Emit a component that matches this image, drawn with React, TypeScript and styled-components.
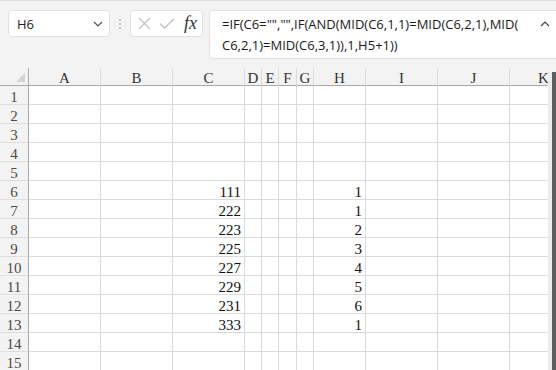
import React from "react";
import styled, { createGlobalStyle } from "styled-components";

const GlobalStyle = createGlobalStyle`
  html, body {
    margin: 0;
    padding: 0;
    background: #f3f3f3;
    overflow: hidden;
  }
  body {
    font-family: "Open Sans", "Noto Sans CJK SC", sans-serif;
  }
`;

const Page = styled.div`
  width: 556px;
  height: 370px;
  overflow: hidden;
  background: #f3f3f3;
`;

const Toolbar = styled.div`
  display: flex;
  align-items: flex-start;
  height: 68px;
  box-sizing: border-box;
  padding: 9px 0 0 8px;
  border-top: 1px solid #dedede;
`;

const NameBox = styled.div`
  display: flex;
  align-items: center;
  justify-content: space-between;
  width: 102px;
  height: 27px;
  box-sizing: border-box;
  padding: 0 6px 0 8px;
  background: #fff;
  border: 1px solid #e1e1e1;
  border-radius: 4px;
  font-size: 13px;
  color: #222;
`;

const Dots = styled.div`
  display: flex;
  flex-direction: column;
  gap: 2px;
  margin: 9px 9px 0 9px;
  span {
    width: 2px;
    height: 2px;
    background: #b4b4b4;
    border-radius: 1px;
  }
`;

const FuncBox = styled.div`
  display: flex;
  align-items: center;
  gap: 8px;
  width: 73px;
  height: 27px;
  box-sizing: border-box;
  padding: 0 4px 0 7px;
  background: #fff;
  border: 1px solid #e1e1e1;
  border-radius: 4px;
`;

const Fx = styled.span`
  font-family: "Liberation Serif", serif;
  font-style: italic;
  font-size: 18px;
  color: #333;
  margin-left: 1px;
`;

const FormulaBox = styled.div`
  position: relative;
  flex: 1;
  height: 49px;
  margin-left: 6px;
  box-sizing: border-box;
  padding: 3px 0 0 12px;
  background: #fff;
  border: 1px solid #e1e1e1;
  border-right: none;
  border-radius: 4px 0 0 4px;
  font-size: 13px;
  line-height: 21px;
  color: #1a1a1a;
  white-space: nowrap;
`;

const Collapse = styled.svg`
  position: absolute;
  top: 10px;
  right: 6px;
`;

const Sheet = styled.div`
  display: flex;
  height: 302px;
`;

const GridWrap = styled.div`
  width: 548px;
  overflow: hidden;
  flex-shrink: 0;
`;

const Grid = styled.div`
  display: grid;
  grid-template-columns: 29px 72px 72px 72px 17px 17px 18px 17px 52px 72px 72px 68px;
  grid-template-rows: 18px;
  grid-auto-rows: 19px;
  width: 577px;
  font-family: "Liberation Serif", "Noto Sans CJK SC", serif;
  font-size: 15px;
`;

const Corner = styled.div`
  position: relative;
  background: #f3f3f3;
  border-right: 1px solid #a9a9a9;
  border-bottom: 1px solid #a9a9a9;
  &::after {
    content: "";
    position: absolute;
    right: 3px;
    bottom: 3px;
    border-style: solid;
    border-width: 0 0 9px 9px;
    border-color: transparent transparent #d4d4d4 transparent;
  }
`;

const ColHead = styled.div`
  text-align: center;
  padding-top: 3px;
  background: #f3f3f3;
  border-right: 1px solid #dcdcdc;
  border-bottom: 1px solid #a9a9a9;
  color: #333;
  line-height: 15px;
  white-space: nowrap;
`;

const RowHead = styled.div`
  text-align: center;
  padding-top: 4px;
  background: #f3f3f3;
  border-right: 1px solid #a9a9a9;
  border-bottom: 1px solid #dedede;
  color: #4a4a4a;
  line-height: 15px;
`;

const Cell = styled.div<{ $last?: boolean }>`
  text-align: right;
  padding: 4px 3px 0 0;
  background: #fff;
  border-right: 1px solid ${(p) => (p.$last ? "#a9a9a9" : "#dadada")};
  border-bottom: 1px solid #dadada;
  color: #111;
  line-height: 15px;
`;

const Scroll = styled.div`
  display: flex;
  width: 8px;
  margin-top: 4px;
  div:first-child {
    width: 4px;
    background: #ececec;
  }
  div:last-child {
    width: 4px;
    background: #5e5e5e;
  }
`;

const cols = ["A", "B", "C", "D", "E", "F", "G", "H", "I", "J", "K"];
const cVals = ["111", "222", "223", "225", "227", "229", "231", "333"];
const hVals = ["1", "1", "2", "3", "4", "5", "6", "1"];

function valueAt(row: number, col: string) {
  if (row < 6 || row > 13) return "";
  if (col === "C") return cVals[row - 6];
  if (col === "H") return hVals[row - 6];
  return "";
}

export default function App() {
  const rows = Array.from({ length: 15 }, (_, i) => i + 1);
  return (
    <Page>
      <GlobalStyle />
      <Toolbar>
        <NameBox>
          <span>H6</span>
          <svg width="10" height="6" viewBox="0 0 10 6">
            <path d="M1 1l4 4 4-4" fill="none" stroke="#555" strokeWidth="1.2" />
          </svg>
        </NameBox>
        <Dots>
          <span />
          <span />
          <span />
        </Dots>
        <FuncBox>
          <svg width="13" height="13" viewBox="0 0 13 13">
            <path d="M1 1l11 11M12 1L1 12" stroke="#c2c2c2" strokeWidth="1.3" />
          </svg>
          <svg width="16" height="11" viewBox="0 0 16 11">
            <path d="M1 5.5l4.5 4.5L15 1" fill="none" stroke="#c2c2c2" strokeWidth="1.3" />
          </svg>
          <Fx>fx</Fx>
        </FuncBox>
        <FormulaBox>
          {'=IF(C6="","",IF(AND(MID(C6,1,1)=MID(C6,2,1),MID('}
          <br />
          {"C6,2,1)=MID(C6,3,1)),1,H5+1))"}
          <Collapse width="10" height="6" viewBox="0 0 10 6">
            <path d="M1 5l4-4 4 4" fill="none" stroke="#444" strokeWidth="1.2" />
          </Collapse>
        </FormulaBox>
      </Toolbar>
      <Sheet>
        <GridWrap>
          <Grid>
            <Corner />
            {cols.map((c) => (
              <ColHead key={c}>{c}</ColHead>
            ))}
            {rows.map((r) => (
              <React.Fragment key={r}>
                <RowHead>{r}</RowHead>
                {cols.map((c) => (
                  <Cell key={c} $last={c === "K"}>
                    {valueAt(r, c)}
                  </Cell>
                ))}
              </React.Fragment>
            ))}
          </Grid>
        </GridWrap>
        <Scroll>
          <div />
          <div />
        </Scroll>
      </Sheet>
    </Page>
  );
}
